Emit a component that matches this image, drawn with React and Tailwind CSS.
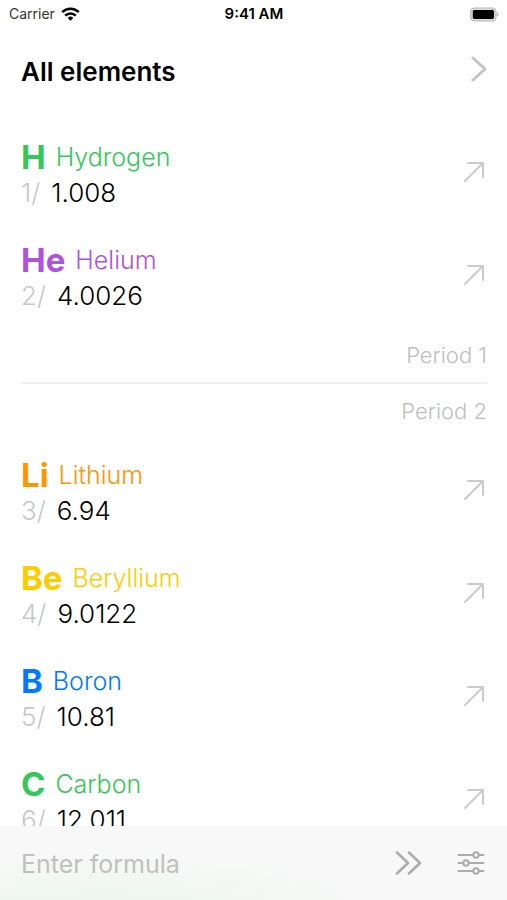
const periods = [
  {
    period: 1,
    elements: [
      { number: 1, symbol: "H", name: "Hydrogen", weight: "1.008", color: "text-[#34c759]" },
      { number: 2, symbol: "He", name: "Helium", weight: "4.0026", color: "text-[#af52de]" },
    ],
  },
  {
    period: 2,
    elements: [
      { number: 3, symbol: "Li", name: "Lithium", weight: "6.94", color: "text-[#ff9500]" },
      { number: 4, symbol: "Be", name: "Beryllium", weight: "9.0122", color: "text-[#ffcc00]" },
      { number: 5, symbol: "B", name: "Boron", weight: "10.81", color: "text-[#007aff]" },
      { number: 6, symbol: "C", name: "Carbon", weight: "12.011", color: "text-[#34c759]" },
    ],
  },
];

function StatusBar() {
  return (
    <div className="grid h-7 shrink-0 grid-cols-3 items-center pr-2 pl-[9px] text-sm text-black">
      <div className="flex items-center gap-1.5 text-[#333]">
        <span>Carrier</span>
        <svg className="h-[14px] w-[19px]" viewBox="0 0 19 14" fill="none" stroke="#000" strokeWidth="2.6" aria-hidden="true">
          <path d="M1.2 5.2a11.800 11.800 0 0 1 16.600 0" />
          <path d="M4.2 8.6a7.600 7.600 0 0 1 10.600 0" />
          <path d="M9.5 13.800 6.700 10.900a4 4 0 0 1 5.600 0Z" fill="#000" stroke="none" />
        </svg>
      </div>
      <span className="text-center text-[15px] font-semibold">9:41 AM</span>
      <svg className="h-[15px] w-[29px] justify-self-end" viewBox="0 0 31 16" aria-hidden="true">
        <rect x="0.8" y="1" width="27" height="14" rx="4" fill="#ddd" stroke="#b5b5b5" strokeWidth="1.2" />
        <rect x="3" y="3.2" width="22.600" height="9.600" rx="1.600" fill="#000" />
        <path d="M29 5.800c2 .7 2 3.700 0 4.400Z" fill="#aaa" />
      </svg>
    </div>
  );
}

function ElementRow({ element }) {
  return (
    <li className="flex h-[103px] items-center justify-between">
      <div className="pt-0.5">
        <h2 className={`flex items-center gap-2.5 leading-9 ${element.color}`}>
          <span className="text-[33px] font-bold">{element.symbol}</span>
          <span className="text-[25px] font-light">{element.name}</span>
        </h2>
        <p className="flex gap-[11px] text-[26px] leading-9 font-light">
          <span className="text-[#c7c7cc]">{element.number}/</span>
          <span className="text-black">{element.weight}</span>
        </p>
      </div>
      <button type="button" aria-label={`Open ${element.name}`} className="mr-[3px] pb-1">
        <svg className="size-5" viewBox="0 0 20 20" fill="none" stroke="#cbcbcb" strokeWidth="2" strokeLinecap="round" strokeLinejoin="round" aria-hidden="true">
          <path d="M1 19 19 1M4 1h15v14" />
        </svg>
      </button>
    </li>
  );
}

function PeriodLabel({ period }) {
  return <p className="py-[13px] text-right text-[22px] leading-7 font-light text-[#bebebe]">Period {period}</p>;
}

export default function App() {
  return (
    <div className="flex h-screen flex-col overflow-hidden bg-white font-['Inter','Liberation_Sans',sans-serif]">
      <StatusBar />
      <header className="flex h-[94px] shrink-0 items-center justify-between pr-5 pb-2 pl-[21px]">
        <h1 className="text-[26px] font-semibold text-black">All elements</h1>
        <button type="button" aria-label="Next" className="pb-1">
          <svg className="h-[26px] w-4" viewBox="0 0 16 26" fill="none" stroke="#c4c4c4" strokeWidth="3" strokeLinecap="round" strokeLinejoin="round" aria-hidden="true">
            <path d="M2 2 14 13 2 24" />
          </svg>
        </button>
      </header>
      <main className="min-h-0 flex-1 overflow-hidden pr-5 pl-[21px]">
        <ul>
          {periods[0].elements.map((element) => (
            <ElementRow key={element.number} element={element} />
          ))}
        </ul>
        <PeriodLabel period={1} />
        <hr className="border-t-2 border-[#efefef]" />
        <PeriodLabel period={2} />
        <ul className="pt-0.5">
          {periods[1].elements.map((element) => (
            <ElementRow key={element.number} element={element} />
          ))}
        </ul>
      </main>
      <footer className="flex h-[74px] shrink-0 items-center bg-[#f8f8f8] bg-[radial-gradient(ellipse_at_20%_120%,#ebf6ed,transparent_50%)] pr-[22px] pl-[21px]">
        <input
          type="text"
          aria-label="Formula"
          placeholder="Enter formula"
          className="min-w-0 flex-1 bg-transparent pt-1 text-[25px] outline-none placeholder:text-[#bfc1c0]"
        />
        <div className="flex items-center gap-[35px]">
          <button type="button" aria-label="Continue">
            <svg className="h-6 w-[27px]" viewBox="0 0 27 24" fill="none" stroke="#adadad" strokeWidth="2.6" strokeLinecap="round" strokeLinejoin="round" aria-hidden="true">
              <path d="M2 1.500 13 12 2 22.500M14 1.500 25 12 14 22.500" />
            </svg>
          </button>
          <button type="button" aria-label="Settings">
            <svg className="h-6 w-7" viewBox="0 0 28 24" fill="none" stroke="#adadad" strokeWidth="2" strokeLinecap="round" aria-hidden="true">
              <path d="M1.500 4H16M22 4h4.500M1.500 12H6M12 12h14.500M1.500 20H16M22 20h4.500" />
              <circle cx="19" cy="4" r="2.700" />
              <circle cx="9" cy="12" r="2.700" />
              <circle cx="19" cy="20" r="2.700" />
            </svg>
          </button>
        </div>
      </footer>
    </div>
  );
}
